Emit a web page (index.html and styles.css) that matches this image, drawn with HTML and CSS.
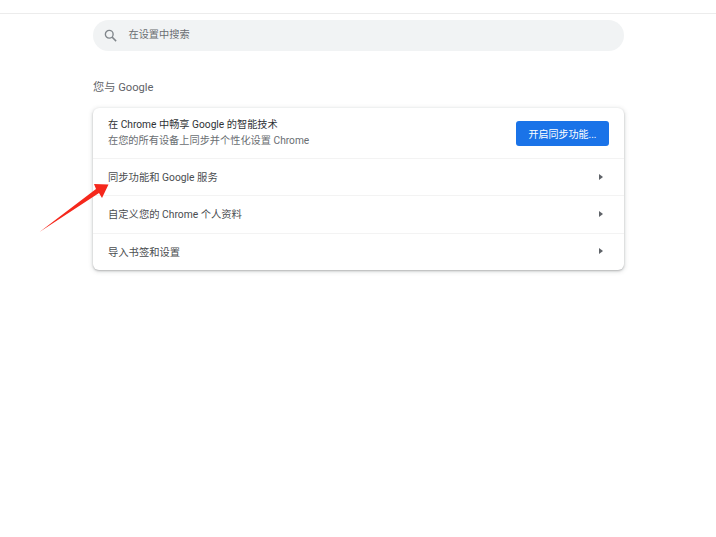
FILE: index.html
```html
<!DOCTYPE html>
<html lang="zh-CN">
<head>
<meta charset="utf-8">
<title>设置</title>
<link rel="stylesheet" href="styles.css">
</head>
<body>
<div class="topline"></div>
<main class="content">
  <div class="search">
    <svg class="search-icon" viewBox="0 0 24 24" width="15" height="15"><circle cx="10" cy="10" r="6.2" fill="none" stroke="#80868b" stroke-width="2.2"/><path d="M14.6 14.6 21 21" stroke="#80868b" stroke-width="2.4" fill="none"/></svg>
    <span class="search-text">在设置中搜索</span>
  </div>
  <h2 class="section-title">您与 Google</h2>
  <section class="card">
    <div class="row row-sync">
      <div class="sync-text">
        <div class="sync-title">在 Chrome 中畅享 Google 的智能技术</div>
        <div class="sync-sub">在您的所有设备上同步并个性化设置 Chrome</div>
      </div>
      <button class="sync-btn">开启同步功能...</button>
    </div>
    <div class="row row-link"><span>同步功能和 Google 服务</span><i class="caret"></i></div>
    <div class="row row-link"><span>自定义您的 Chrome 个人资料</span><i class="caret"></i></div>
    <div class="row row-link"><span>导入书签和设置</span><i class="caret"></i></div>
  </section>
</main>
<svg class="arrow" viewBox="0 0 716 537" width="716" height="537"><polygon points="39.500,232 96,189 94,184 108.500,184.500 102,198 99,193" fill="#f5281c"/></svg>
</body>
</html>
```
FILE: styles.css
```css
html, body { margin: 0; padding: 0; background: #fff; }
body {
  width: 716px; height: 537px; overflow: hidden; position: relative;
  font-family: Roboto, "Noto Sans CJK SC", sans-serif;
  color: #3c4043;
}
.topline { height: 1px; margin-top: 13px; background: #ececec; }
.content { width: 531px; margin: 6px 0 0 93px; }
.search {
  height: 31px; border-radius: 16px; background: #f1f3f4;
  display: flex; align-items: flex-start; padding: 8px 0 0 10px; box-sizing: border-box;
}
.search-icon { flex: none; }
.search-text { margin-left: 10.500px; font-size: 10.200px; line-height: 13px; color: #6a6e72; }
.section-title {
  margin: 29px 0 0; font-size: 11.200px; font-weight: 400; line-height: 16px; color: #5f6368;
}
.card {
  margin-top: 12px; background: #fff; border-radius: 6px;
  box-shadow: 0 1px 2px rgba(60,64,67,.3), 0 1px 4px 1px rgba(60,64,67,.15);
}
.row {
  display: flex; align-items: center; justify-content: space-between;
  padding: 0 21px 0 15px; box-sizing: border-box;
}
.row-sync { height: 50px; padding-right: 15px; }
.row-link { height: 37.330px; border-top: 1px solid #f3f3f3; font-size: 10.300px; color: #4a4d50; padding-bottom: 1px; }
.sync-title { font-size: 10.200px; line-height: 15px; color: #303336; }
.sync-sub { font-size: 10.200px; line-height: 16px; color: #6a6e72; margin-top: 1px; }
.sync-btn {
  width: 93px; height: 25px; border: 0; border-radius: 3px; padding: 0;
  background: #1a73e8; color: #fff; font: inherit; font-size: 10px;
}
.caret {
  width: 0; height: 0; border-left: 4px solid #5f6368;
  border-top: 3px solid transparent; border-bottom: 3px solid transparent;
}
.arrow { position: absolute; left: 0; top: 0; pointer-events: none; }
```
